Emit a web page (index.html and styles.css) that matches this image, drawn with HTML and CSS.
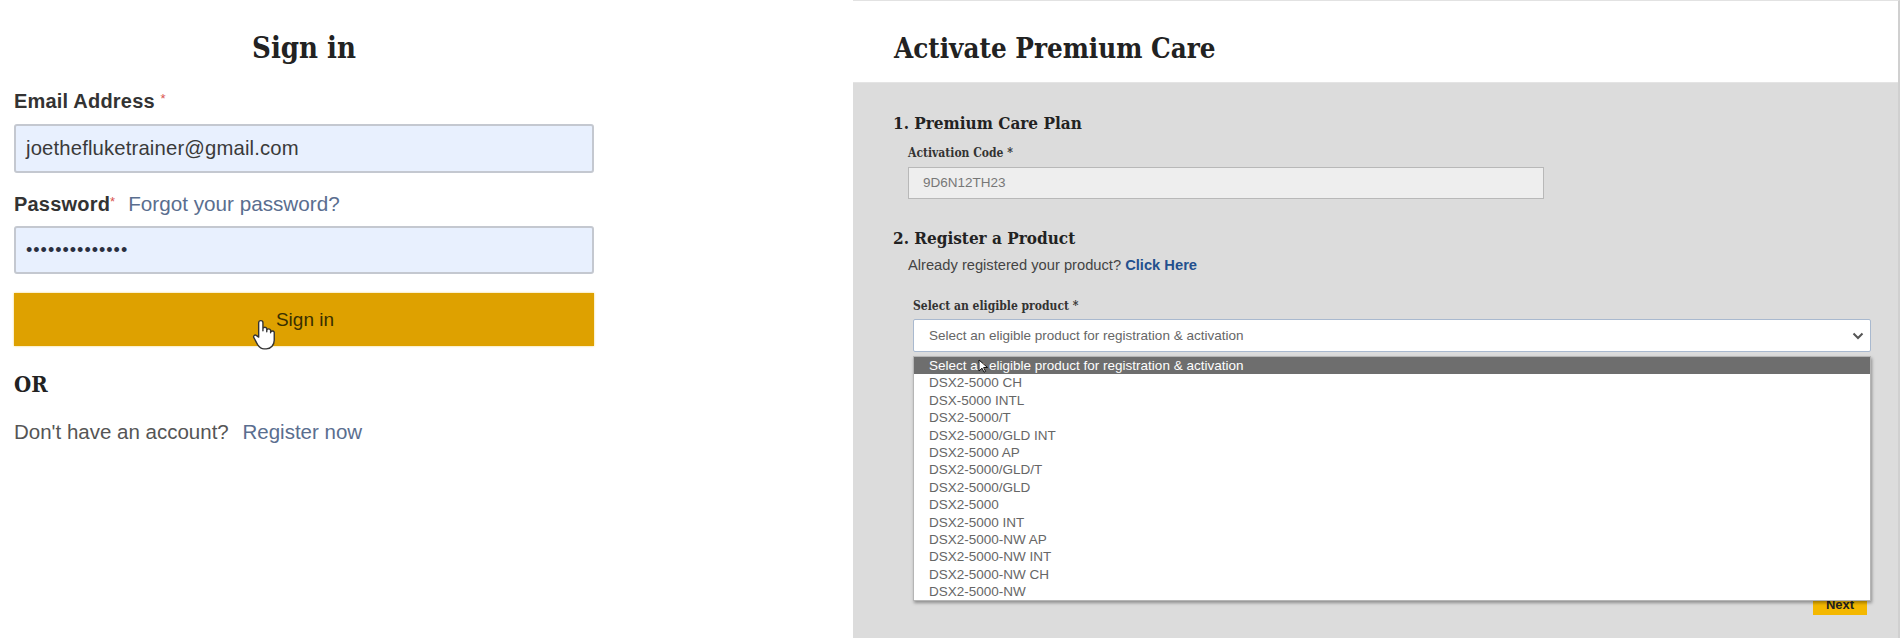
FILE: index.html
```html
<!DOCTYPE html>
<html>
<head>
<meta charset="utf-8">
<link rel="stylesheet" href="styles.css">
</head>
<body>
<div class="page">
  <section class="signin">
    <h1 class="title">Sign in</h1>
    <div class="lbl email-lbl">Email Address <span class="req">*</span></div>
    <div class="input">joethefluketrainer@gmail.com</div>
    <div class="lbl">Password<span class="req">*</span> <a class="link">Forgot your password?</a></div>
    <div class="input pw">&bull;&bull;&bull;&bull;&bull;&bull;&bull;&bull;&bull;&bull;&bull;&bull;&bull;&bull;</div>
    <div class="btn">
      <span>Sign in</span>
      <svg class="hand" width="24" height="32" viewBox="0 0 22 30"><path d="M6 13V3.5a2 2 0 0 1 4 0V11l0-2.2a2 2 0 0 1 3.6 0V12l0-1.6a2 2 0 0 1 3.6 0V13l0-.8a2 2 0 0 1 3.4 0V20c0 4-3 8-7.5 8H11c-3 0-4.5-1.8-6-4L1.5 17.5c-.8-1.4.6-3 2.2-2.2L6 17z" fill="#fff" stroke="#333" stroke-width="1.3" stroke-linejoin="round"/></svg>
    </div>
    <h2 class="or">OR</h2>
    <p class="reg">Don't have an account? <a class="link">Register now</a></p>
  </section>

  <section class="activate">
    <header class="act-head">
      <h1 class="title">Activate Premium Care</h1>
    </header>
    <div class="act-body">
      <h3 class="step">1. Premium Care Plan</h3>
      <div class="group">
        <div class="flabel">Activation Code *</div>
        <div class="code">9D6N12TH23</div>
      </div>
      <h3 class="step step2">2. Register a Product</h3>
      <div class="group">
        <p class="already">Already registered your product? <a class="click">Click Here</a></p>
        <div class="selgroup">
          <div class="flabel">Select an eligible product *</div>
          <div class="select-wrap">
            <div class="select">
              <span>Select an eligible product for registration &amp; activation</span>
              <svg class="chev" width="12" height="8" viewBox="0 0 12 8"><path d="M1.5 1.5L6 6l4.5-4.5" fill="none" stroke="#555" stroke-width="2"/></svg>
            </div>
            <ul class="dropdown">
              <li class="hl">Select an eligible product for registration &amp; activation
                <svg class="arrow" width="10" height="14" viewBox="0 0 10 14"><path d="M1 1v11l3-2.8 2 4 1.6-.8-2-3.9H9.5z" fill="#fff" stroke="#111" stroke-width="1"/></svg>
              </li>
              <li>DSX2-5000 CH</li>
              <li>DSX-5000 INTL</li>
              <li>DSX2-5000/T</li>
              <li>DSX2-5000/GLD INT</li>
              <li>DSX2-5000 AP</li>
              <li>DSX2-5000/GLD/T</li>
              <li>DSX2-5000/GLD</li>
              <li>DSX2-5000</li>
              <li>DSX2-5000 INT</li>
              <li>DSX2-5000-NW AP</li>
              <li>DSX2-5000-NW INT</li>
              <li>DSX2-5000-NW CH</li>
              <li>DSX2-5000-NW</li>
            </ul>
            <div class="next-row"><span class="next">Next</span></div>
          </div>
        </div>
      </div>
    </div>
  </section>
</div>
</body>
</html>
```
FILE: styles.css
```css
html, body {
  margin: 0;
  padding: 0;
  background: #fff;
  height: 100%;
}
body {
  font-family: "Liberation Sans", Arial, sans-serif;
  color: #333;
  overflow: hidden;
}
.page {
  display: flex;
  height: 638px;
}

/* ---------- Sign in ---------- */
.signin {
  width: 580px;
  padding: 0 0 0 14px;
  display: flex;
  flex-direction: column;
}
.title {
  font-family: "DejaVu Serif Condensed", "DejaVu Serif", serif;
  font-stretch: condensed;
  font-size: 29px;
  font-weight: bold;
  color: #222;
  margin: 0;
  line-height: 36px;
}
.signin .title {
  text-align: center;
  margin-top: 30px;
}
.lbl {
  font-size: 20px;
  font-weight: bold;
  color: #333;
  line-height: 24px;
  letter-spacing: 0.2px;
  margin-top: 17px;
}
.lbl.email-lbl { margin-top: 21px; }
.lbl .req {
  color: #d9534f;
  font-size: 13px;
  vertical-align: 5px;
  font-weight: normal;
}
.lbl .link {
  font-weight: normal;
  font-size: 20.7px;
  margin-left: 7px;
}
.link {
  color: #5a6e8f;
  text-decoration: none;
  letter-spacing: 0;
}
.input {
  margin-top: 11px;
  box-sizing: border-box;
  height: 49px;
  background: #e8f0fe;
  border: 2px solid #c4c8d0;
  border-radius: 3px;
  font-size: 20.3px;
  line-height: 45px;
  padding-left: 10px;
  color: #3a3a3a;
  letter-spacing: 0.15px;
}
.input.pw {
  margin-top: 10px;
  height: 48px;
  color: #2a2f40;
  font-size: 18px;
  letter-spacing: 1px;
}
.btn {
  margin-top: 19px;
  height: 53px;
  background: #dea100;
  box-shadow: 0 0 2px #f3d46a;
  display: flex;
  align-items: center;
  justify-content: center;
  font-size: 19px;
  color: #3a3000;
  position: relative;
}
.btn span { margin-left: 2px; }
.hand {
  position: absolute;
  left: 238px;
  top: 26px;
}
.or {
  font-family: "DejaVu Serif Condensed", "DejaVu Serif", serif;
  font-stretch: condensed;
  font-size: 22px;
  font-weight: bold;
  color: #222;
  margin: 24px 0 0 0;
  line-height: 28px;
}
.reg {
  margin: 22px 0 0 0;
  font-size: 20.5px;
  line-height: 24px;
  color: #555;
}
.reg .link { margin-left: 8px; }

/* ---------- Activate ---------- */
.activate {
  margin-left: auto;
  width: 1045px;
  margin-right: 2px;
  display: flex;
  flex-direction: column;
  border-top: 1px solid #e2e2e2;
  border-right: 2px solid #d0d0d0;
}
.act-head {
  background: #fff;
  height: 82px;
  box-sizing: border-box;
  padding: 29px 0 0 41px;
  border-bottom: 1px solid #e4e4e4;
}
.act-head .title {
  font-size: 27.5px;
}
.act-body {
  flex: 1;
  background: #dcdcdc;
  padding: 28px 30px 0 40px;
}
.step {
  font-family: "DejaVu Serif Condensed", "DejaVu Serif", serif;
  font-stretch: condensed;
  font-size: 17px;
  font-weight: bold;
  color: #222;
  margin: 0;
  line-height: 24px;
}
.step2 { margin-top: 27px; }
.group {
  padding-left: 15px;
}
.flabel {
  font-family: "DejaVu Serif Condensed", "DejaVu Serif", serif;
  font-stretch: condensed;
  font-size: 12px;
  font-weight: bold;
  color: #333;
  line-height: 16px;
  margin-top: 10px;
}
.code {
  margin-top: 6px;
  width: 636px;
  height: 32px;
  box-sizing: border-box;
  background: #eeeeee;
  border: 1px solid #b8b8b8;
  font-size: 13.5px;
  line-height: 30px;
  padding-left: 14px;
  color: #777;
}
.already {
  margin: 5px 0 0 0;
  font-size: 14.7px;
  line-height: 20px;
  color: #444;
}
.click {
  color: #23508e;
  font-weight: bold;
}
.selgroup {
  padding-left: 5px;
}
.selgroup .flabel { margin-top: 23px; }
.select-wrap {
  position: relative;
  width: 958px;
  margin-top: 5px;
}
.select {
  height: 33px;
  box-sizing: border-box;
  background: #fff;
  border: 1px solid #a9b9cf;
  border-radius: 2px;
  display: flex;
  align-items: center;
  justify-content: space-between;
  padding: 0 6px 0 15px;
  font-size: 13.5px;
  color: #666;
}
.dropdown {
  position: absolute;
  left: 0;
  right: 0;
  top: 37px;
  margin: 0;
  padding: 0;
  list-style: none;
  background: #fff;
  border: 1px solid #b5b5b5;
  box-shadow: 1px 2px 3px rgba(0,0,0,0.35);
  z-index: 2;
}
.dropdown li {
  height: 17.4px;
  line-height: 17.4px;
  padding-left: 15px;
  font-size: 13.5px;
  color: #666;
  position: relative;
}
.dropdown li.hl {
  background: #6e6e6e;
  color: #fff;
}
.arrow {
  position: absolute;
  left: 64px;
  top: 2px;
}
.next-row {
  display: flex;
  justify-content: flex-end;
  margin-top: 242px;
  padding-right: 4px;
}
.next {
  background: #f4b800;
  width: 54px;
  height: 21px;
  font-size: 13px;
  font-weight: bold;
  color: #222;
  text-align: center;
  line-height: 21px;
}
```
